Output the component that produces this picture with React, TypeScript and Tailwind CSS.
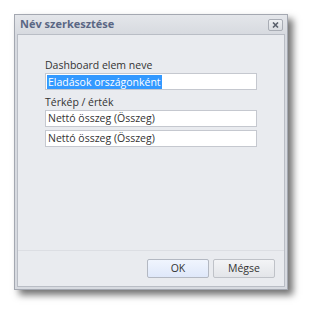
export default function App() {
  const font = { fontFamily: '"Open Sans", "Noto Sans", sans-serif' };
  return (
    <div className="h-[319px] w-[317px] bg-white pl-[14px] pt-[14px]" style={font}>
      <div className="flex h-[276px] w-[274px] flex-col border border-[#a4a8b1] bg-[#d7dae0] shadow-[5px_5px_7px_rgba(0,0,0,0.55)]">
        <div className="flex h-[19px] items-center justify-between bg-gradient-to-b from-[#e4e6ea] to-[#d7dae0] pl-[5px] pr-[4px]">
          <span className="text-[11px] font-bold text-[#5a6784]">Név szerkesztése</span>
          <button className="flex h-[12px] w-[15px] items-center justify-center rounded-[2px] border border-[#a9adb5] bg-gradient-to-b from-[#eef0f3] to-[#d9dce1]">
            <svg width="7" height="6" viewBox="0 0 7 6">
              <path d="M1 0.5 L6 5.5 M6 0.5 L1 5.5" stroke="#5a606c" strokeWidth="1.6" />
            </svg>
          </button>
        </div>
        <div className="mx-[2px] mb-[2px] flex flex-1 flex-col border border-[#b9bdc5] bg-[#e9ebef]">
          <div className="flex flex-1 flex-col px-[27px] pt-[23px]">
            <div className="text-[10.5px] leading-[14px] text-[#333]">Dashboard elem neve</div>
            <div className="mt-[1px] flex h-[17px] items-center border border-[#c5c8cf] bg-white px-[1px]">
              <span className="bg-[#3399ff] px-[1px] text-[10.5px] leading-[14px] text-white">Eladások országonként</span>
            </div>
            <div className="mt-[5px] text-[10.5px] leading-[14px] text-[#333]">Térkép / érték</div>
            <div className="mt-[1px] flex h-[17px] items-center border border-[#c5c8cf] bg-white px-[2px] text-[10.5px] text-[#333]">
              Nettó összeg (Összeg)
            </div>
            <div className="mt-[3px] flex h-[17px] items-center border border-[#c5c8cf] bg-white px-[2px] text-[10.5px] text-[#333]">
              Nettó összeg (Összeg)
            </div>
          </div>
          <div className="flex h-[36px] items-start justify-end gap-[4px] border-t border-[#dcdee3] pr-[9px] pt-[8px]">
            <button className="h-[19px] w-[62px] rounded-[2px] border border-[#b3b8c2] bg-gradient-to-b from-[#f0f5fe] to-[#dfe8fa] text-[10.5px] text-[#333]">
              OK
            </button>
            <button className="h-[19px] w-[62px] rounded-[2px] border border-[#bfc2c8] bg-gradient-to-b from-[#f3f4f6] to-[#e3e5e9] text-[10.5px] text-[#333]">
              Mégse
            </button>
          </div>
        </div>
      </div>
    </div>
  );
}
